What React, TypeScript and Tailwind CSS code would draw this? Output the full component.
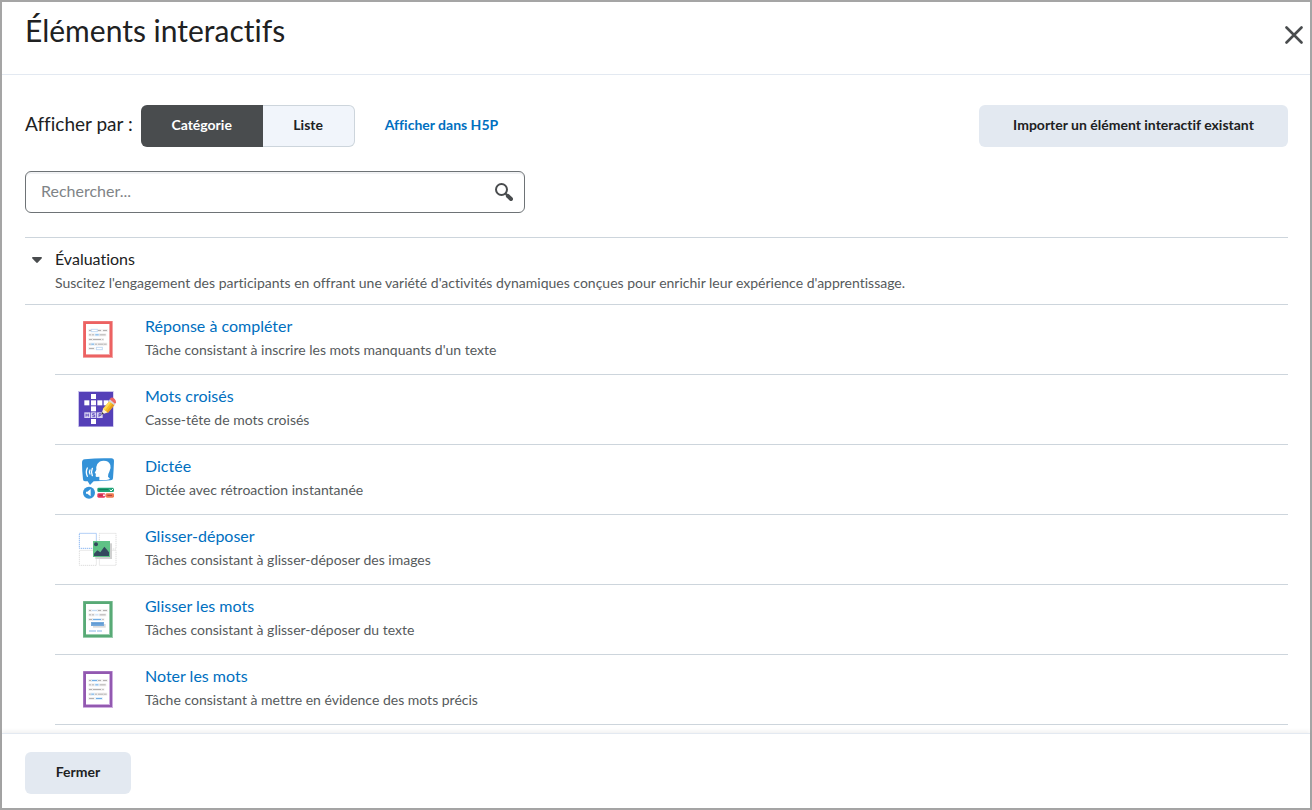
import { useState } from 'react';
import type { ReactNode } from 'react';

type Line = [x: number, y: number, width: number, color: string];

const GRAY = '#b3b0b0';
const BLUE = '#70aee6';
const PALE = '#c3daf3';

const TextLines = ({ lines }: { lines: Line[] }) => (
    <>
        {lines.map(([x, y, width, color]) => (
            <g key={`${x}-${y}`}>
                <rect x={x - 2} y={y - 3} width={width + 4} height="9" fill={color} opacity="0.2" />
                <rect x={x} y={y} width={width} height="3" fill={color} />
            </g>
        ))}
    </>
);

const Sheet = ({ color, edge, children }: { color: string; edge: string; children: ReactNode }) => (
    <svg viewBox="0 0 180 180" className="w-[60px] h-[60px] shrink-0" aria-hidden="true">
        <rect x="39" y="33" width="90" height="111" fill={edge} />
        <rect x="40" y="34" width="86" height="107" fill={color} />
        <rect x="48" y="42" width="72" height="93" fill={edge} />
        <rect x="48" y="42" width="69" height="90" fill="#fff" />
        {children}
    </svg>
);

const FillBlanksIcon = () => (
    <Sheet color="#ec6262" edge="#f3a5a5">
        <TextLines
            lines={[
                [57, 60, 6, GRAY], [84, 60, 9, GRAY], [99, 60, 12, GRAY],
                [57, 73, 6, GRAY], [66, 73, 6, GRAY], [76, 73, 10, BLUE], [89, 73, 18, GRAY],
                [57, 87, 9, GRAY], [69, 87, 24, GRAY], [97, 87, 3, GRAY],
                [57, 101, 5, GRAY], [64, 101, 8, BLUE], [75, 101, 6, GRAY], [84, 101, 16, GRAY], [102, 101, 8, GRAY],
                [57, 114, 15, GRAY],
            ]}
        />
        <rect x="64" y="58" width="18" height="7" fill="#fff" stroke={PALE} strokeWidth="3" />
        <rect x="79" y="112" width="18" height="7" fill="#fff" stroke={PALE} strokeWidth="3" />
    </Sheet>
);

const DragWordsIcon = () => (
    <Sheet color="#58aa76" edge="#9bcdae">
        <TextLines
            lines={[
                [57, 60, 6, GRAY], [66, 60, 15, PALE], [84, 60, 9, GRAY], [99, 60, 12, GRAY],
                [57, 73, 6, GRAY], [66, 73, 6, GRAY], [76, 73, 9, PALE], [89, 73, 18, GRAY],
                [57, 87, 9, GRAY], [69, 87, 24, BLUE], [97, 87, 4, GRAY],
            ]}
        />
        <rect x="69" y="102" width="38" height="11" fill="#dcdcdc" />
        <rect x="63" y="96" width="39" height="12" fill="#77aada" />
        <rect x="66" y="100" width="33" height="3" fill="#5796d4" />
        <rect x="57" y="120" width="21" height="6" fill={PALE} />
        <rect x="81" y="120" width="15" height="6" fill={PALE} />
    </Sheet>
);

const MarkWordsIcon = () => (
    <Sheet color="#9259b0" edge="#cfaee0">
        <TextLines
            lines={[
                [57, 60, 6, GRAY], [66, 60, 15, BLUE], [84, 60, 9, GRAY], [99, 60, 12, GRAY],
                [57, 73, 6, GRAY], [66, 73, 6, GRAY], [76, 73, 9, BLUE], [89, 73, 18, GRAY],
                [57, 87, 9, GRAY], [69, 87, 24, GRAY], [97, 87, 4, GRAY],
                [57, 101, 5, GRAY], [64, 101, 8, BLUE], [75, 101, 6, GRAY], [84, 101, 16, GRAY], [102, 101, 8, GRAY],
                [57, 114, 15, GRAY], [78, 114, 18, BLUE],
            ]}
        />
    </Sheet>
);

const CROSSWORD_CELLS = [
    [63, 42], [43, 61], [63, 61], [82, 61], [101, 61], [63, 79], [63, 117],
];

const CrosswordIcon = () => (
    <svg viewBox="0 0 180 180" className="w-[60px] h-[60px] shrink-0" aria-hidden="true">
        <rect x="24" y="33" width="107" height="108" fill="#c9c2ec" />
        <rect x="27" y="36" width="102" height="103" fill="#5540b8" />
        {CROSSWORD_CELLS.map(([x, y]) => (
            <rect key={`${x}-${y}`} x={x} y={y} width="15" height="15" fill="#fff" />
        ))}
        {[43, 62, 81].map((x) => (
            <rect key={x} x={x} y="97" width="17" height="17" fill="#d9d4f3" />
        ))}
        <path
            d="M48 101v9M55 101v9M48 105h7M74 101h-6v4h6v5h-7M87 111v-10h6v5h-6"
            fill="none"
            stroke="#5540b8"
            strokeWidth="2.5"
        />
        <path d="M94 104l6-20 14 13z" fill="#fff0cc" />
        <path d="M94 104l2-8 6 5z" fill="#33304a" />
        <path d="M99 86l20-24 15 12-20 24z" fill="#f5bd23" />
        <path d="M99 86l20-24 5 4-19 25z" fill="#ffd95a" />
        <path d="M110 95l19-25 5 4-20 24z" fill="#e69a22" />
        <path d="M116 63l4-6 17 13-4 6z" fill="#d8d6dc" />
        <path d="M119 57l4-4q6-1 11 4t4 10l-3 4z" fill="#ef6464" />
    </svg>
);

const DictationIcon = () => (
    <svg viewBox="0 0 180 180" className="w-[60px] h-[60px] shrink-0" aria-hidden="true">
        <path
            d="M44 28Q86 23 124 25q8 0 8 8-1 27-3 52 0 6-7 6-27 3-51 3L60 105l-7-11h-8q-6 0-6-6-3-26-3-50 0-9 8-10z"
            fill="#3492d8"
        />
        <path
            d="M88 91V80l-8 1q-4 0-3-6l1-4-4-2 5-10q-1-10 3-17 6-10 19-10 16 0 20 13 3 10-3 20-5 8-4 15l6 6q-6 5-32 5z"
            fill="#fff"
        />
        <g fill="none" stroke="#fff" strokeWidth="4" strokeLinecap="round">
            <path d="M52 54q-6 12 0 25M60 60q-4 6 0 12M67 55q-5 11 0 22" />
        </g>
        <circle cx="57" cy="128" r="18" fill="#3492d8" />
        <path d="M48 125h4l10-8v22l-10-8h-4z" fill="#fff" />
        <rect x="82" y="113" width="50" height="13" rx="4" fill="#1fa477" />
        <path d="M86 119h29" stroke="#167a58" strokeWidth="3" />
        <path d="M120 119l3 4 7-7" fill="none" stroke="#fff" strokeWidth="3" />
        <rect x="82" y="130" width="24" height="13" rx="4" fill="#e5355d" />
        <rect x="107" y="130" width="25" height="13" rx="4" fill="#f07b51" />
        <path d="M87 136h10M112 136h14" stroke="#a83c42" strokeWidth="3" />
        <circle cx="102" cy="136" r="3" fill="#fff" />
    </svg>
);

const DragDropIcon = () => (
    <svg viewBox="0 0 180 180" className="w-[60px] h-[60px] shrink-0" aria-hidden="true">
        <g fill="none" stroke="#dedede" strokeWidth="3" strokeDasharray="4 2">
            <path d="M88 40h50v47H88zM28 91h51v45H28zM88 91h50v45H88z" />
        </g>
        <path d="M28 40h51v45H28z" fill="none" stroke="#8db8f2" strokeWidth="3" strokeDasharray="4 2" />
        <rect x="76" y="70" width="50" height="47" fill="#d0d0d0" />
        <rect x="69" y="63" width="51" height="48" fill="#5fc286" />
        <circle cx="78" cy="73" r="6" fill="#34495e" />
        <path d="M72 108V101l10-10 9 6 12-17 8 9 6 8v11z" fill="#34495e" />
    </svg>
);

const activities = [
    { name: 'Réponse à compléter', description: "Tâche consistant à inscrire les mots manquants d'un texte", Icon: FillBlanksIcon },
    { name: 'Mots croisés', description: 'Casse-tête de mots croisés', Icon: CrosswordIcon },
    { name: 'Dictée', description: 'Dictée avec rétroaction instantanée', Icon: DictationIcon },
    { name: 'Glisser-déposer', description: 'Tâches consistant à glisser-déposer des images', Icon: DragDropIcon },
    { name: 'Glisser les mots', description: 'Tâches consistant à glisser-déposer du texte', Icon: DragWordsIcon },
    { name: 'Noter les mots', description: 'Tâche consistant à mettre en évidence des mots précis', Icon: MarkWordsIcon },
];

export default function App() {
    const [view, setView] = useState('category');
    const [open, setOpen] = useState(true);

    return (
        <div
            role="dialog"
            aria-labelledby="dialog-title"
            className="flex flex-col h-screen border-2 border-[#a5a5a5] bg-white font-[Lato,sans-serif] text-[#202122] [font-variant-ligatures:none]"
        >
            <header className="flex items-start justify-between shrink-0 pl-[23px] pr-[3px] pb-4 border-b border-[#e3e9f1]">
                <h1 id="dialog-title" className="text-[30px] leading-[56px]">Éléments interactifs</h1>
                <button type="button" aria-label="Fermer la fenêtre" className="mt-5 p-1 text-[#494c4e]">
                    <svg viewBox="0 0 18 18" className="w-[18px] h-[18px]" aria-hidden="true">
                        <path d="M1.5 1.5l15 15M16.5 1.5l-15 15" stroke="currentColor" strokeWidth="2.6" strokeLinecap="round" />
                    </svg>
                </button>
            </header>

            <main className="flex-1 min-h-0 overflow-y-auto pl-[23px] pr-[22px] pt-[30px]">
                <div className="flex items-center">
                    <span id="view-label" className="text-[19px] leading-6 mr-2 pb-1">Afficher par :</span>
                    <div role="group" aria-labelledby="view-label" className="flex h-[42px] text-sm font-bold">
                        <button
                            type="button"
                            aria-pressed={view === 'category'}
                            onClick={() => setView('category')}
                            className={`min-w-[122px] px-5 pb-0.5 rounded-l-md ${view === 'category' ? 'bg-[#494c4e] text-white' : 'bg-[#f1f5fb] border border-[#cdd5dc]'}`}
                        >
                            Catégorie
                        </button>
                        <button
                            type="button"
                            aria-pressed={view === 'list'}
                            onClick={() => setView('list')}
                            className={`min-w-[92px] px-5 pb-0.5 rounded-r-md ${view === 'list' ? 'bg-[#494c4e] text-white' : 'bg-[#f1f5fb] border border-l-0 border-[#cdd5dc]'}`}
                        >
                            Liste
                        </button>
                    </div>
                    <a href="#h5p" className="ml-[30px] pb-0.5 text-sm font-bold text-[#006fbf]">Afficher dans H5P</a>
                    <button type="button" className="ml-auto min-w-[309px] h-[42px] px-5 pb-0.5 rounded-md bg-[#e3e9f1] text-sm font-bold">
                        Importer un élément interactif existant
                    </button>
                </div>

                <div className="flex items-center w-[500px] max-w-full h-[42px] mt-6 pl-[15px] pr-2 rounded-md border border-[#6e7376] shadow-[inset_0_2px_0_0_#f1f2f4]">
                    <input
                        type="text"
                        aria-label="Rechercher"
                        placeholder="Rechercher..."
                        className="flex-1 min-w-0 pb-0.5 text-base bg-transparent outline-none placeholder:text-[#7f8487]"
                    />
                    <button type="button" aria-label="Lancer la recherche" className="p-[3px] text-[#494c4e]">
                        <svg viewBox="0 0 18 18" className="w-[18px] h-[18px]" fill="none" stroke="currentColor" aria-hidden="true">
                            <circle cx="6.5" cy="6.5" r="5.5" strokeWidth="2" />
                            <path d="M10.5 10.5l2 2" strokeWidth="2" />
                            <path d="M12.8 12.8l3.2 3.2" strokeWidth="4" strokeLinecap="round" />
                        </svg>
                    </button>
                </div>

                <section className="mt-6 border-t border-[#cdd5dc]">
                    <div className="flex items-start py-[9px] border-b border-[#cdd5dc]">
                        <button
                            type="button"
                            aria-label="Évaluations"
                            aria-expanded={open}
                            onClick={() => setOpen(!open)}
                            className="w-[30px] h-6 pl-[7px] pt-0.5 text-[#494c4e]"
                        >
                            <svg viewBox="0 0 10 6" className={`w-2.5 h-1.5 ${open ? '' : '-rotate-90'}`} aria-hidden="true">
                                <path d="M.8 0h8.4q1.2.4.4 1.4L5.8 5.6q-.8.7-1.6 0L.4 1.4Q-.4.4.8 0z" fill="currentColor" />
                            </svg>
                        </button>
                        <div>
                            <h2 className="text-base leading-6">Évaluations</h2>
                            <p className="text-sm leading-6 text-[#565a5c]">
                                Suscitez l'engagement des participants en offrant une variété d'activités dynamiques conçues pour enrichir leur expérience d'apprentissage.
                            </p>
                        </div>
                    </div>
                    {open && (
                        <ul className="pl-[30px]">
                            {activities.map(({ name, description, Icon }) => (
                                <li key={name} className="flex gap-[15px] pl-[15px] pt-[5px] pb-1 border-b border-[#cdd5dc]">
                                    <Icon />
                                    <div className="pt-1">
                                        <a href="#activity" className="block text-base leading-6 text-[#006fbf]">{name}</a>
                                        <p className="text-sm leading-6 text-[#565a5c]">{description}</p>
                                    </div>
                                </li>
                            ))}
                        </ul>
                    )}
                </section>
            </main>

            <footer className="shrink-0 px-[23px] pt-[18px] pb-[14px] border-t border-[#e3e9f1] bg-white shadow-[0_-2px_4px_rgba(0,0,0,0.06)]">
                <button type="button" className="min-w-[106px] h-[42px] px-5 pb-0.5 rounded-md bg-[#e3e9f1] text-sm font-bold">
                    Fermer
                </button>
            </footer>
        </div>
    );
}
